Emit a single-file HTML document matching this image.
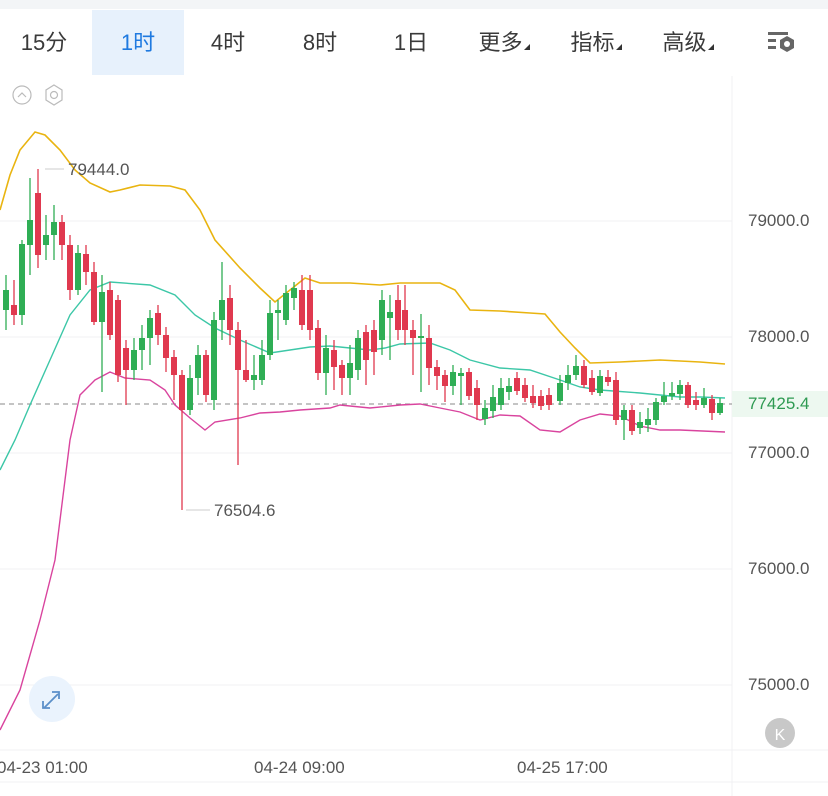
<!DOCTYPE html>
<html><head><meta charset="utf-8"><style>
body{margin:0;width:828px;height:796px;overflow:hidden;background:#fff;font-family:"Liberation Sans","Noto Sans CJK SC",sans-serif;position:relative}
.top{position:absolute;left:0;top:0;width:828px;height:9px;background:#f3f5f7}
.tab{position:absolute;top:10px;height:65px;line-height:66px;font-size:22px;color:#3a3a3a;text-align:center}
.act{background:#e7f1fc;color:#1f7ae0}
.tri{display:inline-block;width:0;height:0;border-left:6px solid transparent;border-bottom:6px solid #333;margin-left:1px}
.pl{position:absolute;left:748px;font-size:17px;color:#555}
.xl{position:absolute;top:758px;font-size:17px;color:#555}
</style></head><body>
<div class="top"></div>
<div class="tab" style="left:4px;width:80px">15分</div>
<div class="tab act" style="left:92px;width:92px">1时</div>
<div class="tab" style="left:188px;width:80px">4时</div>
<div class="tab" style="left:280px;width:80px">8时</div>
<div class="tab" style="left:371px;width:80px">1日</div>
<div class="tab" style="left:464px;width:80px">更多<span class="tri"></span></div>
<div class="tab" style="left:556px;width:80px">指标<span class="tri"></span></div>
<div class="tab" style="left:648px;width:80px">高级<span class="tri"></span></div>
<svg style="position:absolute;left:766px;top:30px" width="32" height="26" viewBox="0 0 32 26"><rect x="2" y="2" width="20" height="3" fill="#666"/><rect x="2" y="9" width="8" height="3" fill="#666"/><rect x="2" y="16" width="8" height="3" fill="#666"/><polygon points="21,6 28,10 28,18 21,22 14,18 14,10" fill="#666"/><circle cx="21" cy="14" r="3" fill="#fff"/></svg>
<svg style="position:absolute;left:0;top:0" width="828" height="796">
<g stroke="#f0f1f3" stroke-width="1">
<line x1="0" y1="221" x2="732" y2="221"/><line x1="0" y1="337" x2="732" y2="337"/><line x1="0" y1="453" x2="732" y2="453"/><line x1="0" y1="569" x2="732" y2="569"/><line x1="0" y1="685" x2="732" y2="685"/>
<line x1="732" y1="76" x2="732" y2="796"/><line x1="0" y1="750" x2="828" y2="750"/><line x1="0" y1="782" x2="828" y2="782"/></g>
<circle cx="22" cy="95" r="9" fill="none" stroke="#bbb" stroke-width="1.2"/><polyline points="18,97 22,93 26,97" fill="none" stroke="#bbb" stroke-width="1.2"/>
<polygon points="54,85 62,90 62,100 54,105 46,100 46,90" fill="none" stroke="#bbb" stroke-width="1.2"/><circle cx="54" cy="95" r="3.5" fill="none" stroke="#bbb" stroke-width="1.2"/>
<line x1="0" y1="404" x2="732" y2="404" stroke="#888" stroke-dasharray="5,4" stroke-width="1"/>
<line x1="45" y1="169" x2="64" y2="169" stroke="#ccc"/><line x1="186" y1="510" x2="210" y2="510" stroke="#ccc"/>
<polyline fill="none" stroke="#e9b410" stroke-width="1.6" points="0,210 10,175 20,150 35,132 45,135 60,150 75,170 90,183 110,192 120,190 140,185 170,186 185,190 200,210 215,240 240,268 260,288 275,302 290,290 305,278 320,283 350,283 380,285 400,283 440,283 455,290 470,310 500,311 530,313 545,314 560,332 575,348 590,363 620,362 660,360 700,362 725,364"/>
<polyline fill="none" stroke="#3cc7a7" stroke-width="1.4" points="0,470 15,440 30,405 50,360 70,315 90,290 110,282 150,285 175,295 195,315 215,328 240,340 270,353 290,350 310,347 330,346 350,348 370,350 385,348 400,344 430,343 450,350 470,360 500,368 530,370 560,380 580,387 600,390 640,393 680,397 700,397 725,398"/>
<polyline fill="none" stroke="#d9449e" stroke-width="1.4" points="0,730 20,690 40,620 55,560 70,440 80,395 95,380 110,372 125,378 150,380 165,390 175,405 190,418 205,430 215,422 240,418 260,413 280,412 300,410 330,408 340,405 370,408 400,405 420,404 440,408 460,412 480,420 500,415 520,416 540,430 560,432 580,420 600,414 620,416 640,426 660,430 680,430 725,432"/>
<g id="c"></g>
<rect x="732" y="391" width="96" height="26" fill="#edf8f0"/>
<circle cx="52" cy="699" r="23" fill="#eaf3fd"/>
<g stroke="#5b8fc9" stroke-width="1.8" fill="none"><line x1="44" y1="708" x2="58" y2="694"/><polyline points="52,692 59,692 59,699"/><polyline points="43,701 43,708 50,708"/></g>
<circle cx="780" cy="733" r="15" fill="#c8c8c8"/><text x="780" y="740" font-size="16" fill="#fff" text-anchor="middle" font-family="Liberation Sans">K</text>
</svg>
<div style="position:absolute;left:68px;top:160px;font-size:17px;color:#555">79444.0</div>
<div style="position:absolute;left:214px;top:501px;font-size:17px;color:#555">76504.6</div>
<div class="pl" style="top:211px">79000.0</div>
<div class="pl" style="top:327px">78000.0</div>
<div class="pl" style="top:394px;color:#2e9a52">77425.4</div>
<div class="pl" style="top:443px">77000.0</div>
<div class="pl" style="top:559px">76000.0</div>
<div class="pl" style="top:675px">75000.0</div>
<div class="xl" style="left:-3px">04-23 01:00</div>
<div class="xl" style="left:254px">04-24 09:00</div>
<div class="xl" style="left:517px">04-25 17:00</div>
<script>
var d=[[6,'g',290,310,275,330],[14,'r',305,315,280,325],[22,'g',244,315,240,325],[30,'g',220,245,178,275],[38,'r',193,255,169,268],[46,'g',235,245,215,260],[54,'g',222,235,205,260],[62,'r',222,245,215,260],[70,'r',245,290,235,300],[78,'g',253,290,245,295],[86,'r',254,272,245,285],[94,'r',272,322,262,325],[102,'g',292,322,275,392],[110,'r',290,335,282,340],[118,'r',300,375,295,382],[126,'r',348,370,340,405],[134,'g',350,370,338,380],[142,'g',338,350,325,370],[150,'g',318,338,310,365],[158,'r',313,335,305,345],[166,'r',335,358,327,372],[174,'r',357,375,350,400],[182,'r',375,410,370,510],[190,'g',378,410,365,415],[198,'g',355,378,345,395],[206,'r',355,395,350,402],[214,'g',320,400,312,410],[222,'g',300,320,262,340],[230,'r',298,330,285,345],[238,'r',330,370,322,465],[246,'r',370,380,340,382],[254,'g',375,380,355,390],[262,'g',355,380,340,385],[270,'g',313,355,300,360],[278,'g',310,313,300,340],[286,'g',293,320,285,325],[294,'g',288,298,282,310],[302,'r',290,325,275,330],[310,'r',290,330,275,340],[318,'r',328,373,320,380],[326,'g',348,373,335,395],[334,'r',350,367,340,390],[342,'r',365,378,360,395],[350,'g',363,378,345,395],[358,'g',338,370,330,380],[366,'r',332,360,325,385],[374,'r',330,352,320,375],[382,'g',300,340,290,355],[390,'g',312,318,295,360],[398,'r',300,330,285,340],[405,'r',310,330,285,345],[413,'r',330,338,320,375],[421,'g',336,338,314,392],[429,'r',338,368,325,385],[437,'r',367,376,360,390],[445,'r',375,386,370,402],[453,'g',372,386,365,395],[461,'g',373,376,368,405],[469,'r',372,396,368,400],[477,'r',388,405,380,420],[485,'g',408,419,400,425],[493,'g',397,411,385,418],[501,'g',388,405,378,410],[509,'g',386,392,378,400],[517,'r',378,391,372,395],[525,'r',385,398,378,402],[533,'r',396,403,385,408],[541,'r',396,406,390,410],[549,'r',395,405,388,410],[560,'g',383,401,375,405],[568,'g',375,383,365,390],[576,'g',366,375,355,380],[584,'r',366,385,360,388],[592,'r',378,392,370,395],[600,'g',376,393,370,396],[608,'r',377,382,370,386],[616,'r',380,420,372,425],[624,'g',410,420,405,440],[632,'r',410,431,405,435],[640,'g',422,428,412,434],[648,'g',419,425,408,432],[656,'g',402,420,398,425],[664,'g',396,402,382,405],[672,'g',393,396,382,400],[680,'g',385,394,380,400],[688,'r',385,405,382,408],[696,'r',400,405,392,410],[704,'g',398,405,388,408],[712,'r',399,413,395,420],[720,'g',403,413,398,415]];
var s='';d.forEach(function(c){var col=c[1]=='g'?'#2fae55':'#e0394f';s+='<line x1="'+c[0]+'" x2="'+c[0]+'" y1="'+c[4]+'" y2="'+c[5]+'" stroke="'+col+'" stroke-width="1.3"/><rect x="'+(c[0]-3)+'" y="'+c[2]+'" width="6" height="'+Math.max(2,c[3]-c[2])+'" fill="'+col+'"/>';});
document.getElementById('c').innerHTML=s;
</script>
</body></html>
